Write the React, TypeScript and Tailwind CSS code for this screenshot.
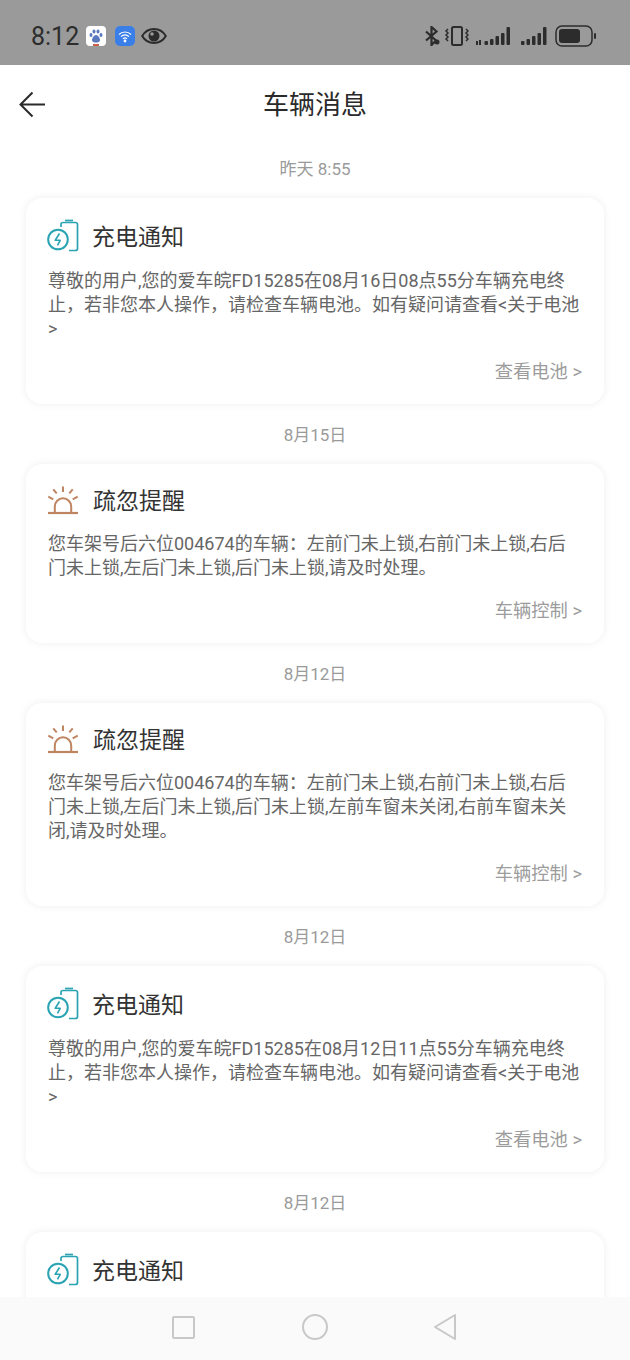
import React from "react";

const FONT = "font-['Roboto','Noto_Sans_CJK_SC',sans-serif]";

interface Msg {
  date: string;
  kind: "charge" | "alert";
  body: string[];
  link: string;
}

const chargeBody = (day: string, time: string) => [
  `尊敬的用户,您的爱车皖FD15285在08月${day}日${time}分车辆充电终`,
  "止，若非您本人操作，请检查车辆电池。如有疑问请查看<关于电池",
  ">",
];

const messages: Msg[] = [
  { date: "昨天 8:55", kind: "charge", body: chargeBody("16", "08点55"), link: "查看电池 >" },
  {
    date: "8月15日",
    kind: "alert",
    body: [
      "您车架号后六位004674的车辆：左前门未上锁,右前门未上锁,右后",
      "门未上锁,左后门未上锁,后门未上锁,请及时处理。",
    ],
    link: "车辆控制 >",
  },
  {
    date: "8月12日",
    kind: "alert",
    body: [
      "您车架号后六位004674的车辆：左前门未上锁,右前门未上锁,右后",
      "门未上锁,左后门未上锁,后门未上锁,左前车窗未关闭,右前车窗未关",
      "闭,请及时处理。",
    ],
    link: "车辆控制 >",
  },
  { date: "8月12日", kind: "charge", body: chargeBody("12", "11点55"), link: "查看电池 >" },
];

function ChargeIcon() {
  return (
    <svg className="-ml-[1px]" width="32" height="33" viewBox="0 0 32 33" fill="none" stroke="#2aa3b3" strokeWidth="1.700">
      <path d="M18 1.500h8" />
      <path d="M14 8V5.500A2 2 0 0 1 16 3.500h12.500a2 2 0 0 1 2 2V29.500a2 2 0 0 1-2 2H22" />
      <circle cx="11" cy="20.500" r="9.800" strokeWidth="2" />
      <path d="M12.500 14.500l-4.300 6.800h5l-2.700 5" strokeWidth="1.600" strokeLinejoin="round" />
    </svg>
  );
}

function AlertIcon() {
  return (
    <svg className="-ml-[1px]" width="32" height="29" viewBox="0 0 32 29" fill="none" stroke="#bf8460" strokeWidth="2">
      <path d="M16 .5v5.500M6.300 3.300l3.400 4M25.700 3.300l-3.400 4M1.300 10.700l5 2.600M30.700 10.700l-5 2.600" />
      <path d="M7.800 26V20.500a8.200 8.200 0 0 1 16.400 0V26" />
      <path d="M1 27h30" strokeWidth="2.200" />
    </svg>
  );
}

function CardHead({ kind }: { kind: Msg["kind"] }) {
  return (
    <div className={`flex items-center ${kind === "charge" ? "h-[69px] pt-[5px] gap-[13px]" : "h-[66px] pt-[6px] gap-[14px]"}`}>
      {kind === "charge" ? <ChargeIcon /> : <AlertIcon />}
      <span className={`text-[23px] leading-[30px] text-[#333333] ${kind === "charge" ? "pt-[5px]" : "pt-[3px]"}`}>
        {kind === "charge" ? "充电通知" : "疏忽提醒"}
      </span>
    </div>
  );
}

function MsgCard({ m }: { m: Msg }) {
  return (
    <div className="rounded-[16px] bg-white shadow-[0_0_8px_rgba(0,0,0,0.07)] px-[22px]">
      <CardHead kind={m.kind} />
      <div className="pt-[2px] text-[18px] leading-[24px] text-[#666666] whitespace-nowrap">
        {m.body.map((line, i) => (
          <div key={i}>{line}</div>
        ))}
      </div>
      <div className="mt-[18px] pb-[19px] text-right text-[18.3px] leading-[26px] text-[#9c9c9c]">{m.link}</div>
    </div>
  );
}

export default function App() {
  return (
    <div className={`flex h-[1360px] w-[630px] flex-col overflow-hidden bg-white ${FONT}`}>
      {/* status bar */}
      <div className="flex h-[65px] shrink-0 items-center justify-between bg-[#9a9a9a] pl-[31px] pr-[33px] pt-[7px]">
        <div className="flex items-center">
          <span className="text-[25px] leading-none text-[#2c2c2c]">8:12</span>
          <div className="relative ml-[7px] flex h-[20px] w-[20px] items-center justify-center rounded-[4px] bg-white">
            <svg width="16" height="16" viewBox="0 0 16 16" fill="#5a78bd">
              <ellipse cx="3" cy="7" rx="1.500" ry="2" />
              <ellipse cx="6" cy="3.500" rx="1.500" ry="2" />
              <ellipse cx="10" cy="3.500" rx="1.500" ry="2" />
              <ellipse cx="13" cy="7" rx="1.500" ry="2" />
              <path d="M8 7c-2 0-4 3-4 5s2 2.500 4 2.500 4-.5 4-2.500-2-5-4-5z" />
            </svg>
            <div className="absolute bottom-0 left-[7px] h-[2px] w-[6px] bg-[#c8604a]" />
          </div>
          <div className="ml-[9px] flex h-[20px] w-[20px] items-center justify-center rounded-[5px] bg-[#3a7fe8]">
            <svg width="14" height="14" viewBox="0 0 14 14" fill="none" stroke="white" strokeWidth="1.200">
              <path d="M1 5.500a8.500 8.500 0 0 1 12 0M3 7.700a5.500 5.500 0 0 1 8 0M5 9.800a2.800 2.800 0 0 1 4 0" />
              <circle cx="7" cy="12" r="0.800" fill="white" />
            </svg>
          </div>
          <svg className="ml-[6px]" width="26" height="18" viewBox="0 0 26 18" fill="none">
            <path d="M1.200 9C4 4.200 8.300 2 13 2s9 2.200 11.800 7C22 13.800 17.700 16 13 16S4 13.800 1.200 9z" stroke="#2c2c2c" strokeWidth="2" />
            <circle cx="13" cy="9" r="5.500" fill="#2c2c2c" />
            <circle cx="11" cy="7" r="1.800" fill="#9a9a9a" />
          </svg>
        </div>
        <div className="flex items-center">
          <svg width="15" height="20" viewBox="0 0 15 20" fill="none" stroke="#2c2c2c" strokeWidth="2.200">
            <path d="M1 5.500l10 9L6.500 19V1l5 4.500L1 14.500" />
            <circle cx="12" cy="16" r="2.500" fill="#2c2c2c" stroke="none" />
          </svg>
          <svg className="ml-[4px]" width="25" height="22" viewBox="0 0 25 22" fill="none" stroke="#2c2c2c">
            <rect x="8" y="2" width="10" height="18" rx="1.500" strokeWidth="2" />
            <path d="M4 4l-2 2 2 2-2 2 2 2-2 2 2 2M22 4l2 2-2 2 2 2-2 2 2 2-2 2" strokeWidth="1.500" />
          </svg>
          <svg className="ml-[7px]" width="35" height="20" viewBox="0 0 35 20" fill="#2c2c2c">
            <rect x="0" y="15" width="2" height="4" />
            <rect x="3" y="14" width="2" height="5" />
            <rect x="8.500" y="15" width="3.500" height="4" rx="1" />
            <rect x="14" y="13" width="3.500" height="6" rx="1" />
            <rect x="19.500" y="10" width="3.500" height="9" rx="1" />
            <rect x="25" y="7" width="3.500" height="12" rx="1" />
            <rect x="30.500" y="1" width="3.500" height="18" rx="1" />
          </svg>
          <svg className="ml-[10px]" width="26" height="20" viewBox="0 0 26 20" fill="#2c2c2c">
            <rect x="0" y="15" width="3.500" height="4" rx="1" />
            <rect x="5.500" y="13" width="3.500" height="6" rx="1" />
            <rect x="11" y="10" width="3.500" height="9" rx="1" />
            <rect x="16.500" y="7" width="3.500" height="12" rx="1" />
            <rect x="22" y="1" width="3.500" height="18" rx="1" />
          </svg>
          <svg className="ml-[8px]" width="42" height="22" viewBox="0 0 42 22" fill="none">
            <rect x="1" y="1" width="36" height="20" rx="6" stroke="#2c2c2c" strokeWidth="1.500" />
            <rect x="4" y="4" width="21" height="14" rx="3" fill="#2c2c2c" />
            <rect x="39" y="8" width="2" height="6" rx="1" fill="#2c2c2c" />
          </svg>
        </div>
      </div>

      {/* header */}
      <div className="relative flex h-[80px] shrink-0 items-center justify-center">
        <svg className="absolute left-[19px] top-[26px]" width="27" height="27" viewBox="0 0 27 27" fill="none" stroke="#2a2a2a" strokeWidth="2">
          <path d="M26 13.500H2M13.500 1.500L1.500 13.500l12 12" />
        </svg>
        <span className="text-[26px] leading-none text-[#2a2a2a]">车辆消息</span>
      </div>

      {/* list */}
      <div className="min-h-0 flex-1 overflow-hidden px-[26px]">
        {messages.map((m, i) => (
          <div key={i}>
            <div className="flex h-[53px] items-center justify-center pb-[3px] text-[17px] text-[#9a9a9a]">{m.date}</div>
            <MsgCard m={m} />
            <div className="h-[7px]" />
          </div>
        ))}
        <div className="flex h-[53px] items-center justify-center pb-[3px] text-[17px] text-[#9a9a9a]">8月12日</div>
        {/* last card runs under the nav bar, only its head shows */}
        <div className="h-[120px] rounded-[16px] bg-white shadow-[0_0_8px_rgba(0,0,0,0.07)] px-[22px]">
          <CardHead kind="charge" />
        </div>
      </div>

      {/* nav bar */}
      <div className="flex h-[63px] shrink-0 items-center bg-[#fafafa] pb-[3px]">
        <div className="ml-[172px] h-[23px] w-[23px] rounded-[2px] border-2 border-[#c8c8c8]" />
        <div className="ml-[107px] h-[26px] w-[26px] rounded-full border-2 border-[#c8c8c8]" />
        <svg className="ml-[105px]" width="24" height="28" viewBox="0 0 24 28" fill="none" stroke="#c8c8c8" strokeWidth="2" strokeLinejoin="round">
          <path d="M22 2L2 14l20 12z" />
        </svg>
      </div>
    </div>
  );
}
